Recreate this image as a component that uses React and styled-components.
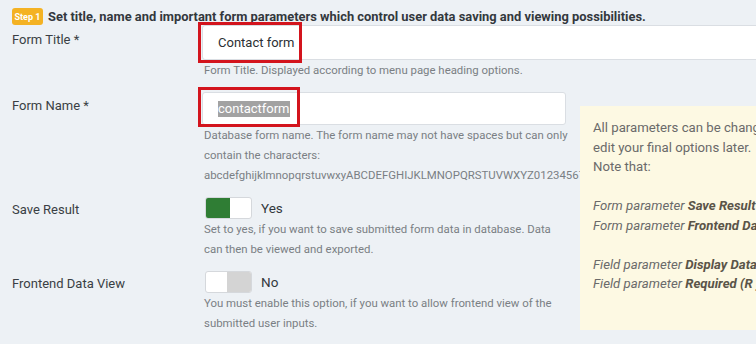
import React from "react";
import styled, { createGlobalStyle } from "styled-components";

const Global = createGlobalStyle`
  html, body { margin: 0; padding: 0; background: #edf1f5; }
  body { font-family: Roboto, "Liberation Sans", Arial, sans-serif; }
`;

const Page = styled.div`
  position: relative;
  width: 756px;
  height: 344px;
  overflow: hidden;
  background: #edf1f5;
  padding: 8px 0 0 12px;
  box-sizing: border-box;
  color: #3a3f44;
`;

const Heading = styled.div`
  display: flex;
  align-items: center;
  gap: 5px;
  height: 17px;
  white-space: nowrap;
`;

const Badge = styled.span`
  display: inline-flex;
  align-items: center;
  justify-content: center;
  width: 31px;
  height: 17px;
  border-radius: 3px;
  background: #f4b223;
  color: #fff;
  font-size: 9px;
  font-weight: 700;
`;

const HeadingText = styled.span`
  font-size: 12.9px;
  font-weight: 700;
  color: #33383d;
`;

const Form = styled.div`
  display: flex;
  flex-direction: column;
  gap: 12px;
`;

const Row = styled.div`
  display: grid;
  grid-template-columns: 190px 1fr;
  align-items: start;
`;

const Label = styled.div`
  padding-top: ${(p) => p.$pad}px;
  font-size: 13px;
  line-height: 20px;
  color: #3a3f44;
`;

const Control = styled.div`
  display: flex;
  flex-direction: column;
  align-items: flex-start;
`;

const FieldWrap = styled.div`
  position: relative;
`;

const Field = styled.div`
  box-sizing: border-box;
  width: ${(p) => p.$w}px;
  height: ${(p) => p.$h}px;
  background: #fff;
  border: 1px solid #dadee3;
  border-radius: 3px;
  padding-left: 15px;
  display: flex;
  align-items: center;
  font-size: 13px;
  color: #2b2f33;
`;

const Selected = styled.span`
  background: #a2a2a2;
  color: #fff;
  line-height: 16px;
`;

const Highlight = styled.div`
  position: absolute;
  left: -4px;
  top: ${(p) => p.$top}px;
  width: ${(p) => p.$w}px;
  height: ${(p) => p.$h}px;
  box-sizing: border-box;
  border: 3px solid #d3141d;
  pointer-events: none;
`;

const Help = styled.div`
  padding-left: 2px;
  font-size: 11.4px;
  line-height: 20px;
  color: #7a7f84;
  white-space: nowrap;
`;

const SwitchLine = styled.div`
  display: flex;
  align-items: center;
  gap: 9px;
  padding-left: 3px;
`;

const Switch = styled.div`
  box-sizing: border-box;
  width: 47px;
  height: 22px;
  border: 1px solid #d5d8dc;
  border-radius: 3px;
  overflow: hidden;
  display: flex;
  flex-direction: ${(p) => (p.$on ? "row" : "row-reverse")};
  background: #fff;
`;

const Track = styled.div`
  width: 24px;
  height: 100%;
  background: ${(p) => (p.$on ? "#2f7d34" : "#d4d4d4")};
`;

const SwitchText = styled.span`
  font-size: 13.5px;
  color: #33383d;
`;

const Notice = styled.div`
  position: absolute;
  left: 580px;
  top: 106px;
  width: 260px;
  height: 224px;
  box-sizing: border-box;
  padding: 12px 0 0 13px;
  background: #fdf9e3;
  font-size: 13.2px;
  line-height: 19.5px;
  color: #6a6a6a;
  white-space: nowrap;
`;

const NoticeLine = styled.div`
  min-height: 19.5px;
  font-style: ${(p) => (p.$italic ? "italic" : "normal")};
  b {
    font-weight: 700;
    color: #5a5448;
  }
`;

export default function App() {
  return (
    <>
      <Global />
      <Page>
        <Heading>
          <Badge>Step 1</Badge>
          <HeadingText>
            Set title, name and important form parameters which control user data saving and viewing possibilities.
          </HeadingText>
        </Heading>
        <Form>
          <Row>
            <Label $pad={5}>Form Title *</Label>
            <Control>
              <FieldWrap>
                <Field $w={620} $h={35}>Contact form</Field>
                <Highlight $top={-3} $w={104} $h={41} />
              </FieldWrap>
              <Help>Form Title. Displayed according to menu page heading options.</Help>
            </Control>
          </Row>
          <Row>
            <Label $pad={4}>Form Name *</Label>
            <Control>
              <FieldWrap>
                <Field $w={364} $h={33}>
                  <Selected>contactform</Selected>
                </Field>
                <Highlight $top={-5} $w={102} $h={40} />
              </FieldWrap>
              <Help>
                Database form name. The form name may not have spaces but can only
                <br />
                contain the characters:
                <br />
                abcdefghijklmnopqrstuvwxyABCDEFGHIJKLMNOPQRSTUVWXYZ0123456789_
              </Help>
            </Control>
          </Row>
          <Row>
            <Label $pad={3}>Save Result</Label>
            <Control>
              <SwitchLine>
                <Switch $on>
                  <Track $on />
                </Switch>
                <SwitchText>Yes</SwitchText>
              </SwitchLine>
              <Help>
                Set to yes, if you want to save submitted form data in database. Data
                <br />
                can then be viewed and exported.
              </Help>
            </Control>
          </Row>
          <Row>
            <Label $pad={3}>Frontend Data View</Label>
            <Control>
              <SwitchLine>
                <Switch>
                  <Track />
                </Switch>
                <SwitchText>No</SwitchText>
              </SwitchLine>
              <Help>
                You must enable this option, if you want to allow frontend view of the
                <br />
                submitted user inputs.
              </Help>
            </Control>
          </Row>
        </Form>
        <Notice>
          <NoticeLine>All parameters can be changed, so you can always</NoticeLine>
          <NoticeLine>edit your final options later.</NoticeLine>
          <NoticeLine>Note that:</NoticeLine>
          <NoticeLine />
          <NoticeLine $italic>
            Form parameter <b>Save Result</b> must be Yes
          </NoticeLine>
          <NoticeLine $italic>
            Form parameter <b>Frontend Data View</b> must be Yes
          </NoticeLine>
          <NoticeLine />
          <NoticeLine $italic>
            Field parameter <b>Display Data</b> must be set
          </NoticeLine>
          <NoticeLine $italic>
            Field parameter <b>Required (R )</b> must be set
          </NoticeLine>
        </Notice>
      </Page>
    </>
  );
}
